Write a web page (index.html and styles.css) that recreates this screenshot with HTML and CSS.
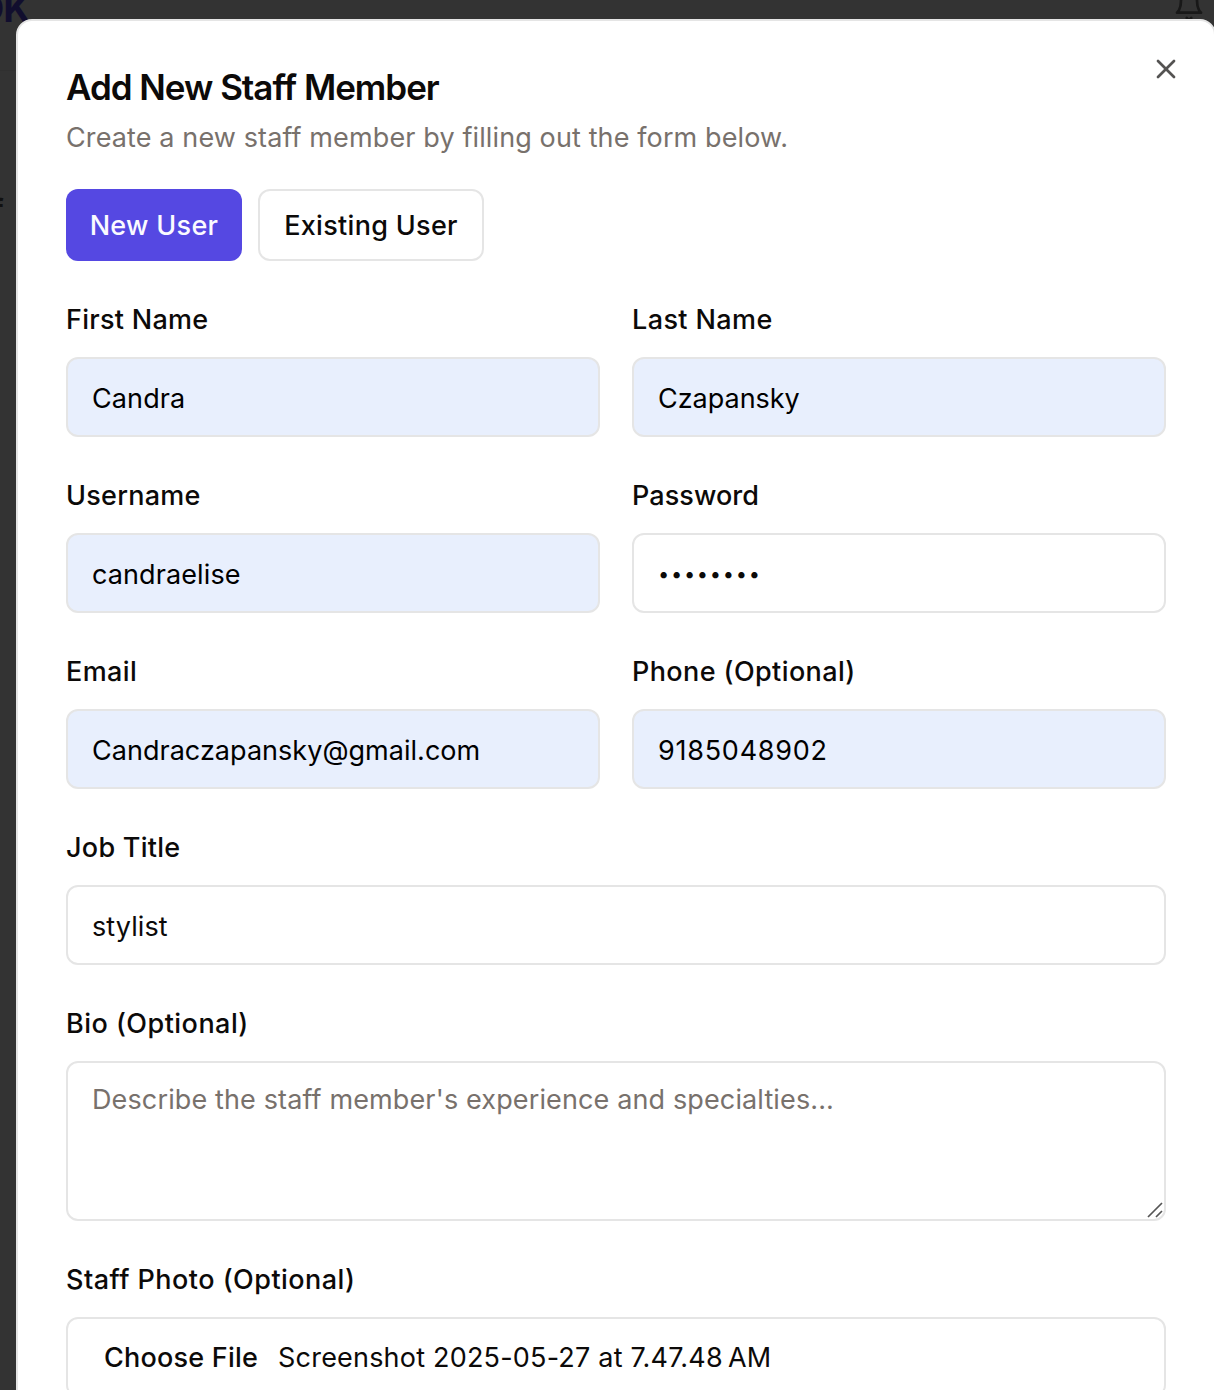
FILE: index.html
```html
<!DOCTYPE html>
<html lang="en">
<head>
<meta charset="utf-8">
<title>Add New Staff Member</title>
<link rel="stylesheet" href="styles.css">
</head>
<body>
<div class="page">
  <header class="topbar">
    <span class="brand">OK</span>
    <svg class="bell" viewBox="0 0 24 24" fill="none" stroke="currentColor" stroke-width="2" stroke-linecap="round" stroke-linejoin="round"><path d="M6 8a6 6 0 0 1 12 0c0 7 3 9 3 9H3s3-2 3-9"/><path d="M10.3 21a1.94 1.94 0 0 0 3.4 0"/></svg>
  </header>
  <div class="page-heading">f</div>
</div>

<section class="dialog" role="dialog" aria-labelledby="title">
  <button class="close" type="button" aria-label="Close">
    <svg viewBox="0 0 24 24" fill="none" stroke="currentColor" stroke-width="2" stroke-linecap="round"><path d="M18 6 6 18"/><path d="m6 6 12 12"/></svg>
  </button>
  <header class="dialog-header">
    <h2 class="title" id="title">Add New Staff Member</h2>
    <p class="subtitle">Create a new staff member by filling out the form below.</p>
  </header>
  <div class="tabs">
    <button class="btn btn-primary" type="button">New User</button>
    <button class="btn btn-outline" type="button">Existing User</button>
  </div>
  <form class="form">
    <label class="field"><span class="label">First Name</span><input class="input autofilled" value="Candra"></label>
    <label class="field"><span class="label label-wide">Last Name</span><input class="input autofilled input-tight" value="Czapansky"></label>
    <label class="field"><span class="label">Username</span><input class="input autofilled" value="candraelise"></label>
    <label class="field"><span class="label label-narrow">Password</span><span class="input password">••••••••</span></label>
    <label class="field"><span class="label label-wide">Email</span><input class="input autofilled input-email" value="Candraczapansky@gmail.com"></label>
    <label class="field"><span class="label label-wide">Phone (Optional)</span><input class="input autofilled input-digits" value="9185048902"></label>
    <label class="field full"><span class="label">Job Title</span><input class="input" value="stylist"></label>
    <label class="field full"><span class="label label-wider">Bio (Optional)</span>
      <span class="textarea-wrap">
        <textarea class="input textarea" placeholder="Describe the staff member's experience and specialties..."></textarea>
        <svg class="grip" viewBox="0 0 16 16" fill="none" stroke="currentColor" stroke-width="1.7"><path d="M1 15 15 1M9 15l6-6"/></svg>
      </span>
    </label>
    <div class="field full"><span class="label label-wider">Staff Photo (Optional)</span>
      <div class="input file"><span class="file-button">Choose File</span><span class="file-name">Screenshot 2025-05-27 at 7.47.48&#8239;AM</span></div>
    </div>
  </form>
</section>
</body>
</html>
```
FILE: styles.css
```css
* { box-sizing: border-box; }

html, body { height: 100%; }

body {
  margin: 0;
  overflow: hidden;
  position: relative;
  background: #333;
  color: #0c0a09;
  font-family: Inter, "Liberation Sans", sans-serif;
  font-size: 27px;
  line-height: 40px;
}

/* Dimmed page behind the dialog */
.topbar {
  display: flex;
  justify-content: space-between;
  height: 71px;
  padding-right: 9px;
  border-bottom: 1px solid #303030;
}
.brand {
  margin: -12px 0 0 -25px;
  font-size: 38px;
  font-weight: 700;
  letter-spacing: -1px;
  color: #110e2e;
}
.bell {
  width: 32px;
  height: 32px;
  margin-top: -10px;
  color: #181818;
}
.page-heading {
  margin: 119px 0 0 -8px;
  font-size: 30px;
  font-weight: 600;
  color: #111;
}

.dialog {
  position: absolute;
  top: 19px;
  left: 16px;
  width: 1200px;
  height: 1400px;
  padding: 48px;
  border: 2px solid #e5e5e5;
  border-radius: 16px;
  background: #fff;
}

.close {
  position: absolute;
  top: 32px;
  right: 32px;
  width: 32px;
  height: 32px;
  padding: 0;
  border: 0;
  background: none;
  color: #545352;
}
.close svg { display: block; width: 32px; height: 32px; }

.dialog-header {
  display: flex;
  flex-direction: column;
  gap: 12px;
}
.title {
  margin: 0;
  font-size: 35px;
  font-weight: 600;
  line-height: 36px;
  letter-spacing: -1.03px;
}
.subtitle {
  height: 40px;
  margin: 0;
  line-height: 42px;
  color: #78716c;
  letter-spacing: 0.12px;
}

.tabs {
  display: flex;
  gap: 16px;
  margin: 32px 0;
}
.btn {
  height: 72px;
  padding: 2px 0 0;
  border: 2px solid transparent;
  border-radius: 12px;
  font: inherit;
  font-weight: 500;
  letter-spacing: 0.31px;
}
.btn-primary { width: 176px; background: #5548e2; color: #fafaff; }
.btn-outline { width: 226px; border-color: #e5e5e5; background: #fff; color: #0c0a09; }

.form {
  display: grid;
  grid-template-columns: 1fr 1fr;
  gap: 32px;
}
.field {
  display: flex;
  flex-direction: column;
  gap: 16px;
}
.full { grid-column: 1 / -1; }

.label {
  height: 48px;
  line-height: 53px;
  font-weight: 500;
  letter-spacing: 0.27px;
}
.label-narrow { letter-spacing: 0.07px; }
.label-wide { letter-spacing: 0.4px; }
.label-wider { letter-spacing: 0.47px; }

.input {
  display: block;
  width: 100%;
  height: 80px;
  padding: 2px 24px 0;
  border: 2px solid #e5e5e5;
  border-radius: 12px;
  outline: 0;
  background: #fff;
  color: #0c0a09;
  font: inherit;
  letter-spacing: 0.1px;
}
.autofilled { background: #e8effd; color: #000; }
.input-tight { letter-spacing: -0.02px; }
.input-email { letter-spacing: 0.03px; }
.input-digits { letter-spacing: 0.75px; }
.password {
  font-size: 20px;
  line-height: 75px;
  letter-spacing: 1.7px;
}

.textarea-wrap { position: relative; display: block; }
.textarea {
  height: 160px;
  padding: 17px 24px 15px;
  resize: none;
}
.textarea::placeholder { color: #78716c; letter-spacing: 0.13px; opacity: 1; }
.grip {
  position: absolute;
  right: 3px;
  bottom: 3px;
  width: 16px;
  height: 16px;
  color: #555;
}

.file {
  display: flex;
  gap: 20px;
  padding: 19px 36px 17px;
}
.file-button { font-weight: 500; letter-spacing: 0.22px; }
.file-name { letter-spacing: 0.2px; }
```
